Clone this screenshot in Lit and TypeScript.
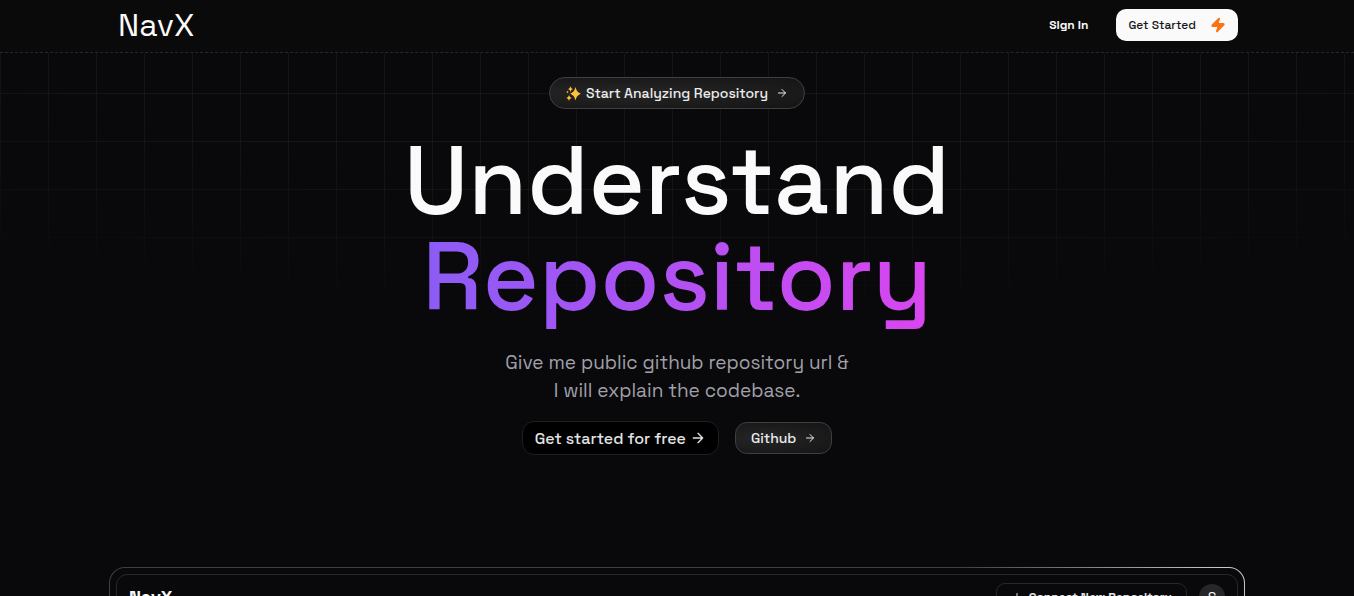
import { LitElement, html, css, svg } from "lit";
import { customElement } from "lit/decorators.js";

const arrow = svg`<path d="M5 12h14M12 5l7 7-7 7" fill="none" stroke="currentColor" stroke-width="2" stroke-linecap="round" stroke-linejoin="round"/>`;

@customElement("app-root")
export class AppRoot extends LitElement {
  static styles = css`
    :host {
      display: block;
      font-family: "Space Grotesk", Inter, "Liberation Sans", sans-serif;
      color: #fafafa;
      background: #09090b;
    }
    *, *::before, *::after { box-sizing: border-box; }
    a { color: inherit; text-decoration: none; }
    h1, h2, p { margin: 0; }
    button { font: inherit; cursor: pointer; }
    svg { display: block; flex: none; }
    .page {
      position: relative;
      height: 100vh;
      overflow: hidden;
      background: #09090b;
    }
    .grid {
      position: absolute;
      inset: 0;
      background-image:
        linear-gradient(to right, #4f4f4f2e 1px, transparent 1px),
        linear-gradient(to bottom, #4f4f4f2e 1px, transparent 1px);
      background-size: 48px 48px;
      background-position: 0 -3px;
      -webkit-mask-image: radial-gradient(ellipse 80% 50% at 50% 0%, #000 60%, transparent 110%);
      mask-image: radial-gradient(ellipse 80% 50% at 50% 0%, #000 60%, transparent 110%);
      pointer-events: none;
    }
    header {
      position: relative;
      background: #0a0a0a;
      border-bottom: 1px dashed #27272a;
    }
    .bar {
      display: flex;
      align-items: center;
      justify-content: space-between;
      max-width: 1122px;
      height: 52px;
      margin: 0 auto;
      padding: 0 0 2px 2px;
    }
    .logo {
      font-size: 32px;
      line-height: 36px;
    }
    .nav { display: flex; align-items: center; gap: 28px; }
    .signin { font-size: 12px; line-height: 16px; font-weight: 600; }
    .start {
      display: flex;
      align-items: center;
      gap: 14px;
      height: 32px;
      padding: 0 12px;
      border-radius: 10px;
      background: #fafafa;
      color: #18181b;
      font-size: 12px;
      font-weight: 500;
    }
    main {
      position: relative;
      display: flex;
      flex-direction: column;
      align-items: center;
      padding: 24px 16px 0;
      text-align: center;
    }
    .pill, .github {
      display: flex;
      align-items: center;
      height: 32px;
      border: 1px solid #3f3f42;
      background: radial-gradient(ellipse at 30% 50%, #262626, #161617 90%);
      color: #ececec;
      font-size: 14px;
      font-weight: 500;
    }
    .pill { gap: 8px; padding: 0 16px; border-radius: 16px; }
    .pill .label { display: flex; align-items: center; gap: 5px; }
    h1 {
      margin-top: 24px;
      font-size: 96px;
      line-height: 96px;
      font-weight: 500;
    }
    h1 span { display: block; }
    .accent {
      width: fit-content;
      margin: 0 auto;
      padding-bottom: 8px;
      color: transparent;
      background: linear-gradient(to right, #8b5cf6, #d946ef);
      -webkit-background-clip: text;
      background-clip: text;
    }
    .lead {
      margin-top: 16px;
      color: #a1a1aa;
      font-size: 19px;
      line-height: 28px;
    }
    .lead span { display: block; }
    .actions { display: flex; align-items: center; gap: 16px; margin-top: 16px; }
    .free {
      display: flex;
      align-items: center;
      gap: 4px;
      height: 34px;
      padding: 0 12px;
      border: 1px solid #1f1f22;
      border-radius: 12px;
      background: #000;
      color: #e2e2e2;
      font-size: 16px;
      font-weight: 500;
    }
    .github { gap: 8px; padding: 0 15px; border-radius: 12px; }
    .frame {
      width: 100%;
      max-width: 1136px;
      margin-top: 112px;
      padding: 1px;
      border-radius: 16px;
      background: linear-gradient(to right, #3f3f42 75%, #c8c8c8 98%);
      text-align: left;
    }
    .inner { padding: 6px; border-radius: 15px; background: #09090b; }
    .preview { border: 1px solid #27272a; border-radius: 11px; min-height: 480px; }
    .top {
      display: flex;
      align-items: center;
      justify-content: space-between;
      padding: 8px 12px;
    }
    .top h2 { font-size: 18px; line-height: 24px; font-weight: 700; }
    .tools { display: flex; align-items: center; gap: 12px; }
    .connect {
      display: flex;
      align-items: center;
      gap: 6px;
      height: 28px;
      padding: 0 14px;
      border: 1px solid #27272a;
      border-radius: 9px;
      background: #09090b;
      color: #e4e4e7;
      font-size: 12px;
      font-weight: 600;
    }
    .avatar {
      display: grid;
      place-items: center;
      width: 26px;
      height: 26px;
      border-radius: 50%;
      background: #27272a;
      font-size: 14px;
      line-height: 24px;
    }
  `;

  render() {
    return html`
      <div class="page">
        <div class="grid"></div>
        <header>
          <div class="bar">
            <a class="logo" href="#">NavX</a>
            <nav class="nav">
              <a class="signin" href="#">Sign In</a>
              <a class="start" href="#">Get Started
                <svg width="16" height="16" viewBox="0 0 24 24" aria-hidden="true"><path d="M4 14a1 1 0 0 1-.78-1.63l9.9-10.2a.5.5 0 0 1 .86.46l-1.92 6.02A1 1 0 0 0 13 10h7a1 1 0 0 1 .78 1.63l-9.9 10.2a.5.5 0 0 1-.86-.46l1.92-6.02A1 1 0 0 0 11 14z" fill="#f97316" stroke="#f97316" stroke-width="2" stroke-linejoin="round"/></svg>
              </a>
            </nav>
          </div>
        </header>
        <main>
          <a class="pill" href="#">
            <span class="label">
              <svg width="15" height="15" viewBox="0 0 30 30" fill="#fdc236" aria-hidden="true"><path d="M19 2c2.200 7.500 4 10.500 11 13.500C23 18.500 21.200 21.500 19 29c-2.200-7.500-4-10.500-11-13.500C15 12.500 16.800 9.500 19 2zM9 0c.8 3.600 2 5.200 5.300 6.200C11 7.200 9.800 8.800 9 12.400 8.200 8.800 7 7.200 3.700 6.200 7 5.200 8.200 3.600 9 0zM6 17.500c.8 3.800 2 5.300 5.600 6.300C8 24.800 6.800 26.200 6 30c-.8-3.800-2-5.200-5.600-6.200C4 22.800 5.200 21.300 6 17.500zM3 9c.4 1.800.9 2.600 2.600 3.100C3.900 12.600 3.400 13.400 3 15.200 2.600 13.400 2.100 12.600.4 12.100 2.100 11.600 2.600 10.800 3 9z"/></svg>
              Start Analyzing Repository
            </span>
            <svg width="12" height="12" viewBox="0 0 24 24" aria-hidden="true">${arrow}</svg>
          </a>
          <h1><span>Understand</span><span class="accent">Repository</span></h1>
          <p class="lead"><span>Give me public github repository url &amp;</span><span>I will explain the codebase.</span></p>
          <div class="actions">
            <button class="free" type="button">Get started for free
              <svg width="16" height="16" viewBox="0 0 24 24" aria-hidden="true">${arrow}</svg>
            </button>
            <a class="github" href="#">Github
              <svg width="12" height="12" viewBox="0 0 24 24" aria-hidden="true">${arrow}</svg>
            </a>
          </div>
          <section class="frame">
            <div class="inner">
              <div class="preview">
                <div class="top">
                  <h2>NavX</h2>
                  <div class="tools">
                    <button class="connect" type="button">
                      <svg width="12" height="12" viewBox="0 0 24 24" aria-hidden="true"><path d="M12 5v14M5 12h14" stroke="currentColor" stroke-width="2" stroke-linecap="round"/></svg>
                      Connect New Repository
                    </button>
                    <span class="avatar">S</span>
                  </div>
                </div>
              </div>
            </div>
          </section>
        </main>
      </div>
    `;
  }
}
